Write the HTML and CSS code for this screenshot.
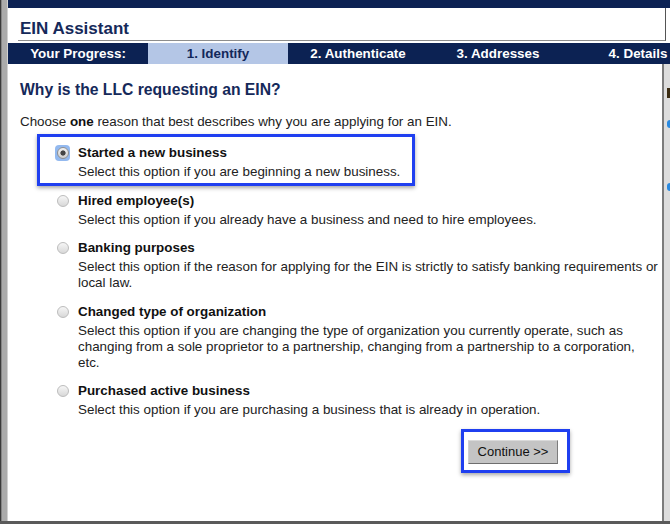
FILE: index.html
```html
<!DOCTYPE html>
<html lang="en">
<head>
<meta charset="utf-8">
<title>EIN Assistant</title>
<link rel="stylesheet" href="styles.css">
</head>
<body>
<div class="window">
  <div class="lside"></div>
  <div class="main">
    <div class="topbar"></div>
    <div class="titlebar"><h1>EIN Assistant</h1></div>
    <div class="progress">
      <div class="step">Your Progress:</div>
      <div class="step active">1. Identify</div>
      <div class="step">2. Authenticate</div>
      <div class="step">3. Addresses</div>
      <div class="step">4. Details</div>
    </div>
    <div class="body">
      <div class="panel">
        <h2>Why is the LLC requesting an EIN?</h2>
        <p class="intro">Choose <b>one</b> reason that best describes why you are applying for an EIN.</p>
        <div class="options">
          <div class="option highlight">
            <span class="focus"><span class="radio checked"></span></span>
            <div class="opt-label">Started a new business</div>
            <div class="desc">Select this option if you are beginning a new business.</div>
          </div>
          <div class="option">
            <span class="radio"></span>
            <div class="opt-label">Hired employee(s)</div>
            <div class="desc">Select this option if you already have a business and need to hire employees.</div>
          </div>
          <div class="option">
            <span class="radio"></span>
            <div class="opt-label">Banking purposes</div>
            <div class="desc">Select this option if the reason for applying for the EIN is strictly to satisfy banking requirements or local law.</div>
          </div>
          <div class="option">
            <span class="radio"></span>
            <div class="opt-label">Changed type of organization</div>
            <div class="desc">Select this option if you are changing the type of organization you currently operate, such as changing from a sole proprietor to a partnership, changing from a partnership to a corporation, etc.</div>
          </div>
          <div class="option">
            <span class="radio"></span>
            <div class="opt-label">Purchased active business</div>
            <div class="desc">Select this option if you are purchasing a business that is already in operation.</div>
          </div>
        </div>
        <div class="actions">
          <div class="focusbox"><button class="btn" type="button">Continue &gt;&gt;</button></div>
        </div>
      </div>
      <div class="scroll">
        <span class="mark dark"></span>
        <span class="mark blue first"></span>
        <span class="mark blue second"></span>
      </div>
    </div>
  </div>
</div>
<div class="bottom"></div>
</body>
</html>
```

FILE: styles.css
```css
html, body {
  margin: 0;
  padding: 0;
}
body {
  width: 670px;
  height: 524px;
  overflow: hidden;
  background: #fff;
  font-family: "Liberation Sans", Arial, Helvetica, sans-serif;
  color: #222;
}
.window {
  display: flex;
  height: 521px;
}
.lside {
  flex: 0 0 8px;
  background: linear-gradient(to right, #3a3a3a 0 1px, #858585 1px 2px, #ababab 2px 7px, #d2d2d2 7px 8px);
}
.main {
  flex: 1;
  min-width: 0;
  display: flex;
  flex-direction: column;
}
.topbar {
  height: 8px;
  background: #0c2253;
}
.titlebar {
  margin: 0 4px 2px 10px;
  padding: 10px 0 0 2px;
  border-bottom: 1px solid #8d8d8d;
  border-right: 1px solid #555;
}
.titlebar h1 {
  margin: 0;
  font-size: 17px;
  line-height: 22px;
  font-weight: bold;
  color: #15295a;
}
.progress {
  display: flex;
  height: 21px;
  background: #0c2253;
  overflow: hidden;
}
.step {
  flex: 0 0 140px;
  text-align: center;
  color: #fff;
  font-weight: bold;
  font-size: 13.4px;
  line-height: 21px;
  white-space: nowrap;
}
.step.active {
  background: #b4c6e6;
  color: #13285a;
}
.body {
  flex: 1;
  display: flex;
  min-height: 0;
}
.panel {
  flex: 1;
  padding: 0 2px 0 12px;
}
.panel h2 {
  margin: 15px 0 0;
  font-size: 15.7px;
  line-height: 21px;
  font-weight: bold;
  color: #15295a;
}
.intro {
  margin: 13px 0 0;
  font-size: 13.4px;
  line-height: 18px;
  color: #222;
}
.intro b {
  color: #111;
}
.options {
  margin: 12px 0 0 35px;
}
.option {
  position: relative;
  display: grid;
  grid-template-columns: 15px 1fr;
  column-gap: 8px;
  margin-bottom: 10.5px;
  font-size: 13.4px;
}
.option .radio,
.option .focus {
  grid-column: 1;
  grid-row: 1;
  align-self: center;
  justify-self: center;
}
.opt-label {
  grid-column: 2;
  grid-row: 1;
  font-weight: bold;
  line-height: 20px;
  color: #111;
}
.desc {
  grid-column: 2;
  grid-row: 2;
  line-height: 16px;
  padding-top: 1px;
  color: #222;
}
.radio {
  display: block;
  width: 12px;
  height: 12px;
  box-sizing: border-box;
  border-radius: 50%;
  border: 1px solid #bcbcbc;
  background: linear-gradient(#f6f6f6, #d8d8d8);
}
.radio.checked {
  border-color: #8f8f8f;
  background: radial-gradient(circle at 50% 50%, #444 0 2.2px, rgba(68,68,68,0) 3px), linear-gradient(#f2f2f2, #cfcfcf);
}
.focus {
  display: block;
  padding: 2px 1.5px;
  background: #93b9ef;
  border-radius: 4px;
}
.option.highlight::after {
  content: "";
  position: absolute;
  left: -18px;
  top: -9px;
  width: 378px;
  height: 52px;
  box-sizing: border-box;
  border: 3px solid #1f3ff0;
  box-shadow: 0 2px 4px rgba(0, 0, 0, 0.35);
  pointer-events: none;
}
.actions {
  display: flex;
  justify-content: flex-end;
  padding-right: 90px;
  margin-top: 0;
}
.focusbox {
  border: 3px solid #1f3ff0;
  padding: 8px 9px 6px 4px;
  box-shadow: 0 2px 4px rgba(0, 0, 0, 0.35);
}
.btn {
  display: block;
  width: 90px;
  height: 24px;
  padding: 0;
  margin: 0;
  font-family: "Liberation Sans", Arial, Helvetica, sans-serif;
  font-size: 13px;
  color: #111;
  background: #c4c4c4;
  border: 1px solid;
  border-color: #dadada #7c7c7c #6e6e6e #d0d0d0;
  border-radius: 0;
}
.scroll {
  flex: 0 0 6px;
  border-left: 2px solid #7b7b7b;
  background: #dcdcdc;
  display: flex;
  flex-direction: column;
  align-items: flex-end;
}
.mark {
  display: block;
  width: 3px;
}
.mark.dark {
  margin-top: 24px;
  height: 10px;
  background: #3b2c12;
}
.mark.blue {
  height: 8px;
  background: #2a8ae0;
  border-radius: 3px 0 0 3px;
}
.mark.first {
  margin-top: 22px;
}
.mark.second {
  margin-top: 55px;
}
.bottom {
  height: 3px;
  background: #5a5a5a;
}
```
